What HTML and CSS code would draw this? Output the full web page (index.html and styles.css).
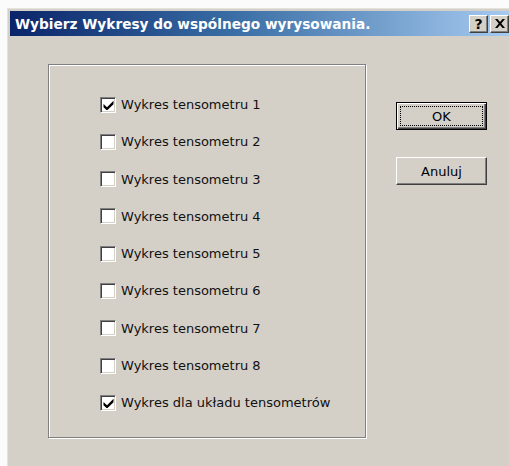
FILE: index.html
```html
<!DOCTYPE html>
<html lang="pl">
<head>
<meta charset="utf-8">
<title>Wybierz Wykresy do wspólnego wyrysowania.</title>
<link rel="stylesheet" href="styles.css">
</head>
<body>
<div class="window">
  <div class="titlebar">
    <span class="title">Wybierz Wykresy do wspólnego wyrysowania.</span>
    <div class="caption-buttons">
      <span class="cap-btn">?</span>
      <span class="cap-btn close">
        <svg width="10" height="9" viewBox="0 0 10 9"><path d="M0 0h2.5l2.5 3 2.5-3h2.5l-3.7 4.5 3.7 4.5h-2.5l-2.5-3-2.5 3h-2.5l3.7-4.5z" fill="#000"/></svg>
      </span>
    </div>
  </div>
  <div class="client">
    <fieldset class="group">
      <label class="row"><span class="box"><svg class="tick" width="11" height="10" viewBox="0 0 11 10"><path d="M0.5 4l3.5 3.2 6.5-6.5v3.6l-6.5 6.2-3.5-3.3z" fill="#000"/></svg></span>Wykres tensometru 1</label>
      <label class="row"><span class="box"></span>Wykres tensometru 2</label>
      <label class="row"><span class="box"></span>Wykres tensometru 3</label>
      <label class="row"><span class="box"></span>Wykres tensometru 4</label>
      <label class="row"><span class="box"></span>Wykres tensometru 5</label>
      <label class="row"><span class="box"></span>Wykres tensometru 6</label>
      <label class="row"><span class="box"></span>Wykres tensometru 7</label>
      <label class="row"><span class="box"></span>Wykres tensometru 8</label>
      <label class="row"><span class="box"><svg class="tick" width="11" height="10" viewBox="0 0 11 10"><path d="M0.5 4l3.5 3.2 6.5-6.5v3.6l-6.5 6.2-3.5-3.3z" fill="#000"/></svg></span>Wykres dla układu tensometrów</label>
    </fieldset>
    <div class="actions">
      <button class="btn default"><span class="focus">OK</span></button>
      <button class="btn">Anuluj</button>
    </div>
  </div>
</div>
</body>
</html>
```
FILE: styles.css
```css
html, body {
  margin: 0;
  height: 100%;
  overflow: hidden;
  background: #fbfbfb;
  font-family: "DejaVu Sans", Tahoma, sans-serif;
}

.window {
  margin: 8px 0 0 7px;
  width: 502px;
  height: 458px;
  background: #d4d0c8;
  border-top: 1px solid #e4e2dc;
  border-left: 1px solid #e4e2dc;
  padding: 2px 0 0 2px;
  box-sizing: border-box;
}

.titlebar {
  height: 25px;
  display: flex;
  align-items: center;
  padding-left: 5px;
  background: linear-gradient(to right, #0a246a 0%, #3a6ea5 45%, #a6caf0 100%);
}

.title {
  color: #fff;
  font-weight: bold;
  font-size: 13.7px;
  flex: 1;
}

.caption-buttons {
  display: flex;
  gap: 2px;
}

.cap-btn {
  width: 19px;
  height: 18px;
  box-sizing: border-box;
  background: #d4d0c8;
  border: 1px solid;
  border-color: #fff #404040 #404040 #fff;
  box-shadow: inset -1px -1px 0 #808080;
  display: flex;
  align-items: center;
  justify-content: center;
  font-weight: bold;
  font-size: 14px;
  color: #000;
}

.client {
  display: flex;
  align-items: flex-start;
  padding: 28px 0 0 38px;
}

.group {
  margin: 0;
  width: 318px;
  height: 374px;
  box-sizing: border-box;
  border: 1px solid #808080;
  box-shadow: inset 1px 1px 0 #fff, 1px 1px 0 #fff;
  padding: 32px 0 0 51px;
  display: flex;
  flex-direction: column;
  gap: 22.3px;
}

.row {
  display: flex;
  align-items: center;
  gap: 5px;
  height: 15px;
  font-size: 13px;
  color: #111;
}

.box {
  width: 16px;
  height: 16px;
  flex: none;
  box-sizing: border-box;
  background: #fff;
  border: 1px solid;
  border-color: #808080 #fff #fff #808080;
  box-shadow: inset 1px 1px 0 #404040, inset -1px -1px 0 #d4d0c8;
  display: flex;
  align-items: center;
  justify-content: center;
}

.tick {
  margin: 1px 0 0 1px;
}

.actions {
  display: flex;
  flex-direction: column;
  gap: 27px;
  margin: 38px 0 0 30px;
}

.btn {
  width: 91px;
  height: 28px;
  box-sizing: border-box;
  background: #d4d0c8;
  border: 1px solid;
  border-color: #fff #404040 #404040 #fff;
  box-shadow: inset -1px -1px 0 #808080;
  font-family: inherit;
  font-size: 13px;
  color: #000;
  padding: 0;
}

.btn.default {
  border: 1px solid #000;
  box-shadow: inset 1px 1px 0 #fff, inset -1px -1px 0 #404040, inset -2px -2px 0 #808080;
  padding: 3px;
  display: flex;
}

.focus {
  flex: 1;
  border: 1px dotted #000;
  display: flex;
  align-items: center;
  justify-content: center;
}
```
